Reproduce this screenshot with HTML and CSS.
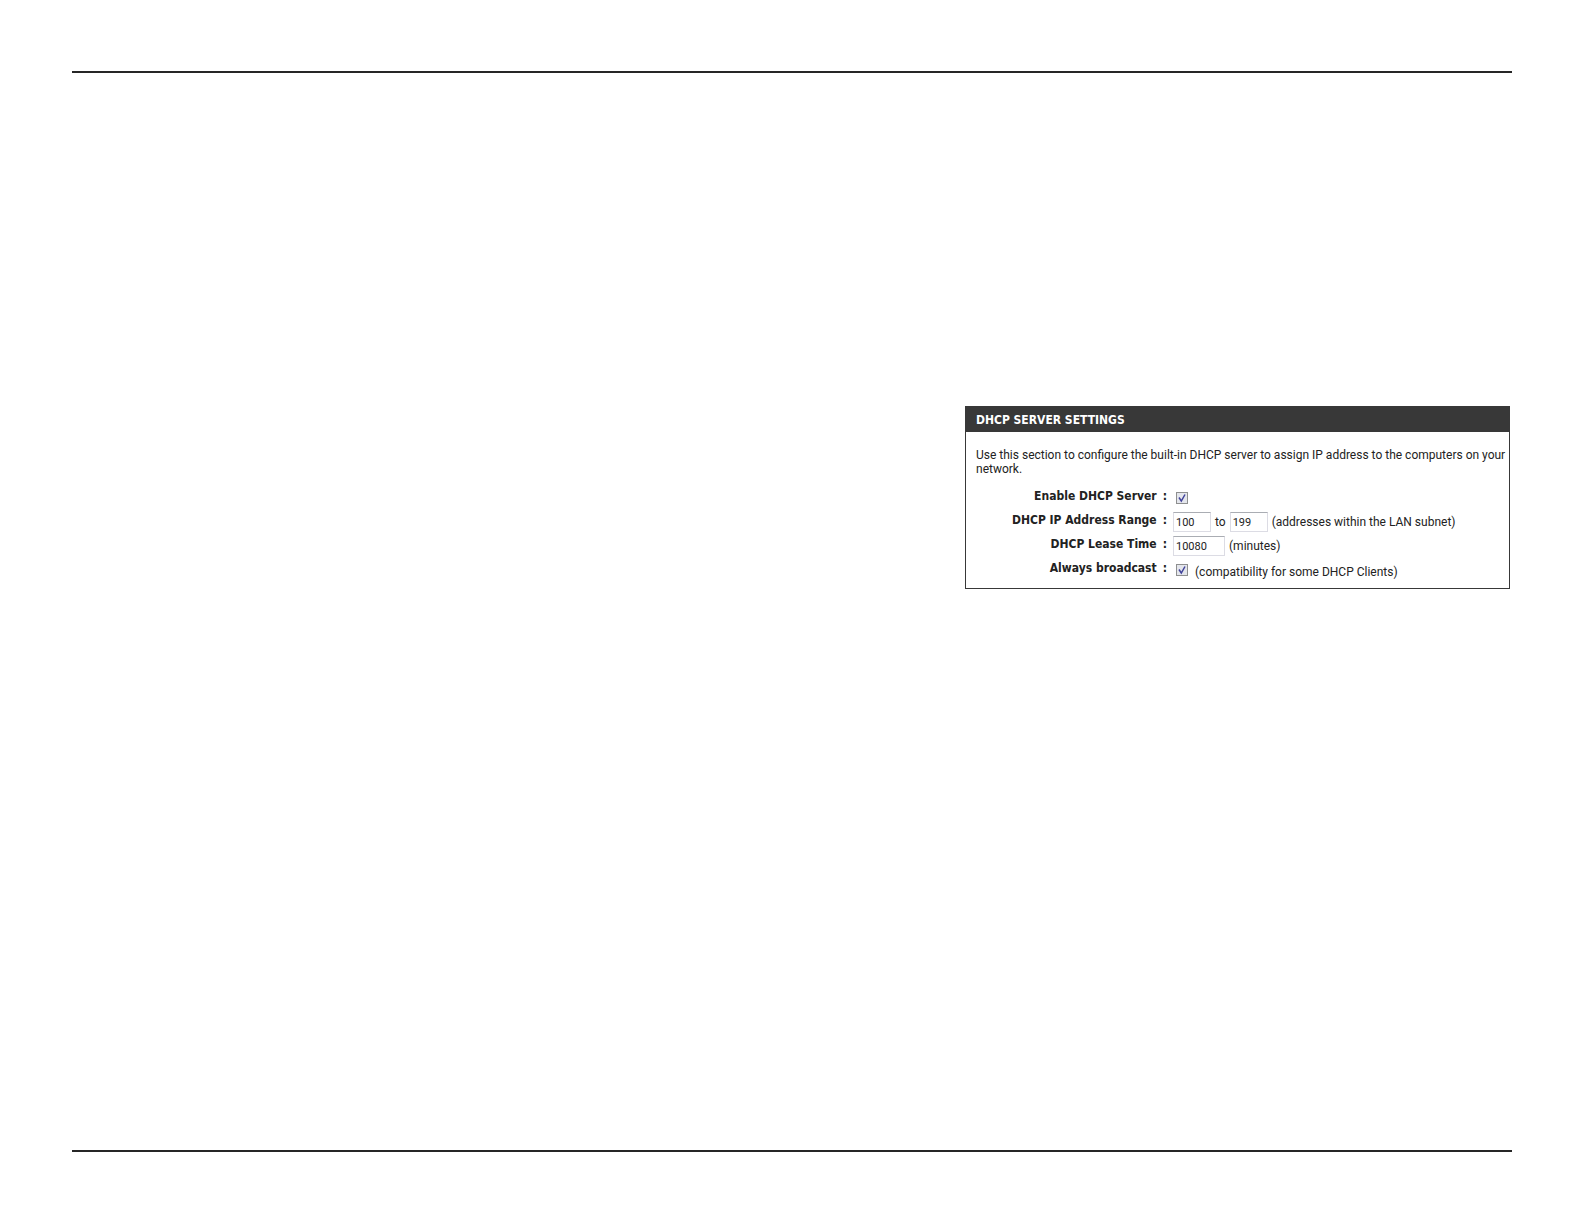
FILE: index.html
```html
<!DOCTYPE html>
<html lang="en">
<head>
<meta charset="utf-8">
<title>DHCP Server Settings</title>
<link rel="stylesheet" href="styles.css">
</head>
<body>
<main class="sheet">
  <section class="panel">
    <h2 class="panel-title">DHCP SERVER SETTINGS</h2>
    <form class="panel-body">
      <p class="intro">Use this section to configure the built-in DHCP server to assign IP address to the computers on your network.</p>
      <div class="row">
        <label class="name" for="enable"><span>Enable DHCP Server</span><span>:</span></label>
        <div class="field"><input class="tick" type="checkbox" id="enable" checked></div>
      </div>
      <div class="row">
        <label class="name" for="from"><span>DHCP IP Address Range</span><span>:</span></label>
        <div class="field"><input class="box" type="text" id="from" value="100"><label for="to">to</label><input class="box" type="text" id="to" value="199"><span>(addresses within the LAN subnet)</span></div>
      </div>
      <div class="row">
        <label class="name" for="lease"><span>DHCP Lease Time</span><span>:</span></label>
        <div class="field"><input class="box box-wide" type="text" id="lease" value="10080"><span>(minutes)</span></div>
      </div>
      <div class="row">
        <label class="name" for="broadcast"><span>Always broadcast</span><span>:</span></label>
        <div class="field"><input class="tick" type="checkbox" id="broadcast" checked><span class="note">(compatibility for some DHCP Clients)</span></div>
      </div>
    </form>
  </section>
</main>
</body>
</html>
```

FILE: styles.css
```css
* { box-sizing: border-box; }
body {
  margin: 0;
  padding: 71px 72px 72px;
  min-height: 100vh;
  display: flex;
  background: #fff;
  color: #222;
  font: 12px/14px Roboto, "Liberation Sans", sans-serif;
}
.sheet {
  flex: 1;
  border-top: 2px solid #262626;
  border-bottom: 2px solid #262626;
  padding: 333px 2px 0;
  display: flex;
  align-items: flex-start;
  justify-content: flex-end;
}
.panel {
  width: 545px;
  border: 1px solid #383838;
}
.panel-title {
  margin: 0;
  padding: 1px 10px 0;
  background: #383838;
  color: #fff;
  font: bold 12px/24px "DejaVu Sans Condensed", "DejaVu Sans", sans-serif;
}
.panel-body { padding: 16px 2px 6px 10px; }
.intro { margin: 0 0 10px; }
.row {
  display: grid;
  grid-template-columns: 191px 1fr;
  column-gap: 6px;
  height: 24px;
}
.name {
  display: flex;
  justify-content: flex-end;
  gap: 6px;
  font: bold 12px/20px "DejaVu Sans Condensed", "DejaVu Sans", sans-serif;
}
.field {
  display: flex;
  align-items: center;
  gap: 4px;
}
.box {
  width: 38px;
  height: 20px;
  padding: 0 2px;
  border: 1px solid #dcdce4;
  border-top-color: #aaadb3;
  background: #fff;
  color: #222;
  font: 11px/14px Roboto, "Liberation Sans", sans-serif;
}
.box-wide { width: 52px; }
.tick {
  appearance: none;
  width: 12px;
  height: 12px;
  margin: 0 3px;
  border: 1px solid #8e8f8f;
  background: #e4e6ec;
}
.tick:checked {
  background: #e4e6ec url("data:image/svg+xml,%3Csvg xmlns='http://www.w3.org/2000/svg' viewBox='0 0 10 10'%3E%3Cpath d='M2 4.5L4.3 8L8 1.5' fill='none' stroke='%2340429a' stroke-width='1.5'/%3E%3C/svg%3E") center / 10px 10px no-repeat;
}
.note { padding-top: 4px; }
```
